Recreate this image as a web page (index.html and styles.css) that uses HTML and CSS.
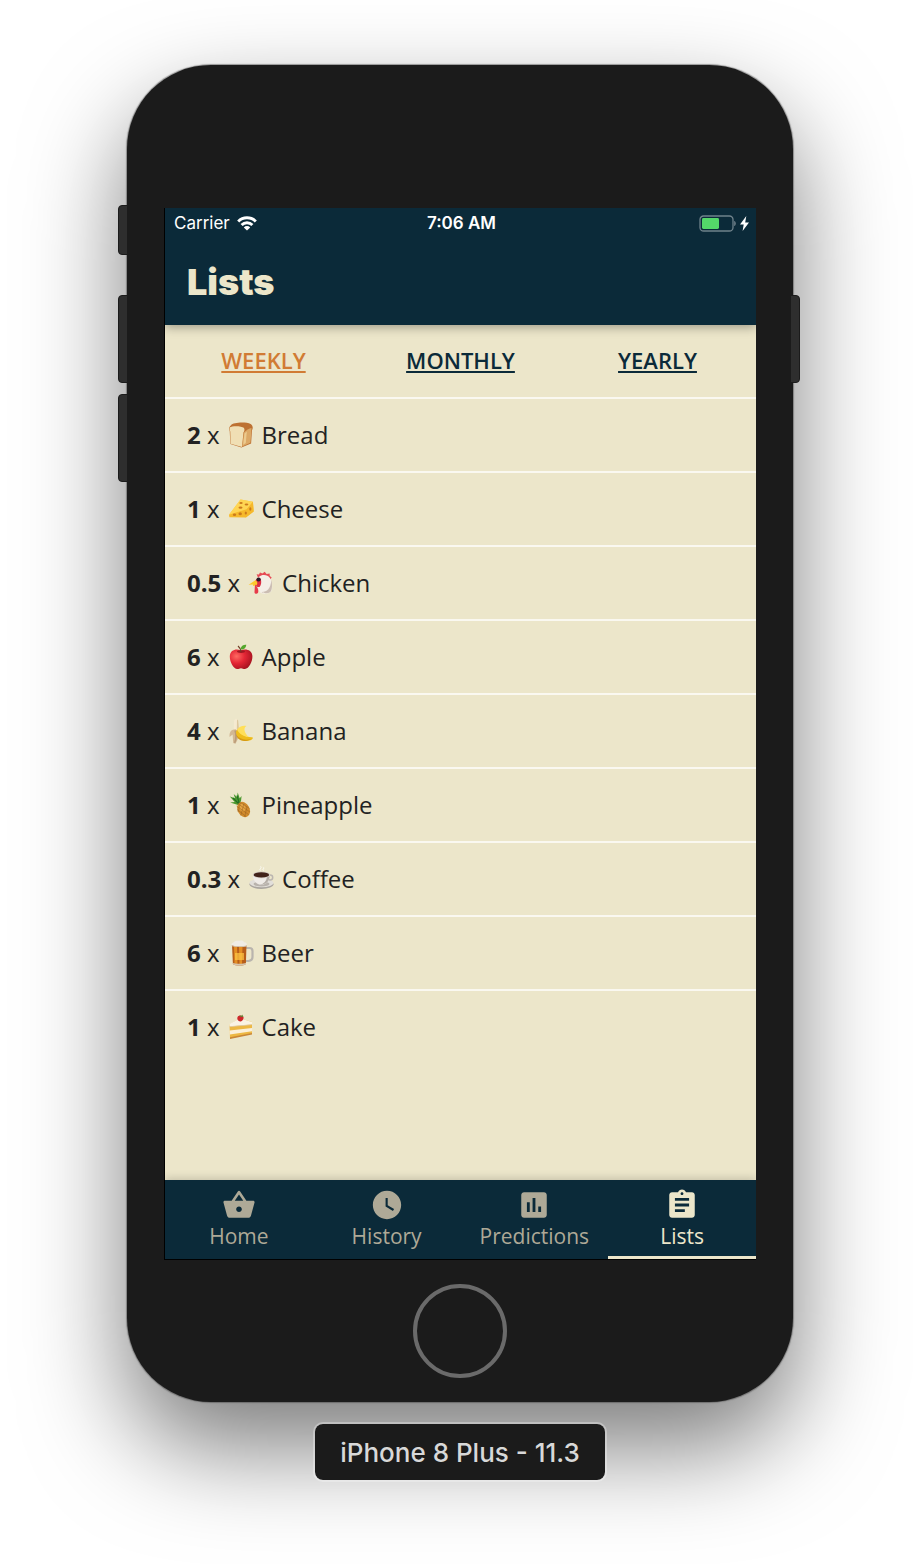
FILE: index.html
```html
<!DOCTYPE html>
<html lang="en">
<head>
<meta charset="utf-8">
<meta name="viewport" content="width=device-width, initial-scale=1">
<title>Lists</title>
<link rel="stylesheet" href="styles.css">
</head>
<body>
<div class="stage">
  <div class="phone">
    <span class="side-key side-key-mute"></span>
    <span class="side-key side-key-up"></span>
    <span class="side-key side-key-down"></span>
    <span class="side-key side-key-power"></span>
    <div class="screen">
      <header class="top">
        <div class="status">
          <div class="status-left">
            <span>Carrier</span>
            <svg class="wifi" viewBox="0 0 20 15" aria-hidden="true"><g fill="none" stroke="#fff" stroke-width="2.9"><path d="M1.2 5.4a12.4 12.4 0 0 1 17.6 0"/><path d="M4.6 9a7.6 7.6 0 0 1 10.8 0"/></g><path d="M10 14.6l-3.2-3.2a4.5 4.5 0 0 1 6.4 0z" fill="#fff"/></svg>
          </div>
          <time class="clock">7:06 AM</time>
          <div class="status-right">
            <svg class="battery" viewBox="0 0 38 17" aria-hidden="true"><rect x="2" y="1" width="33" height="15" rx="3.6" fill="none" stroke="#6f828b" stroke-width="1.3"/><rect x="4" y="3" width="17" height="11" rx="1.4" fill="#53d769"/><path d="M36.400 6c1.600.6 1.600 4.400 0 5z" fill="#8d9ba2"/></svg>
            <svg class="bolt" viewBox="0 0 9 15" aria-hidden="true"><path d="M6.3 0L0 8.4h3.7L2.6 15 9 6.4H5.2z" fill="#fff"/></svg>
          </div>
        </div>
        <h1 class="title">Lists</h1>
      </header>
      <main class="content">
        <nav class="periods" aria-label="Period">
          <a class="period period-active" href="#weekly">WEEKLY</a>
          <a class="period" href="#monthly">MONTHLY</a>
          <a class="period" href="#yearly">YEARLY</a>
        </nav>
        <ul class="items">
          <li class="item"><span><b>2</b> x</span>
            <svg class="food" viewBox="0 0 26 26" role="img" aria-label="bread"><path d="M3 3.200C5 .3 18-.3 22.600 2c2.600 1.400 2.500 4.800 1.400 6.200l-.9 13.200-9.700 4.200-11-3.500-.7-13C.4 7 1.200 4.800 3 3.200z" fill="#bd7132"/><path d="M2 5.300c1.800-1.700 11.800-1.500 13.800.4 1.200 1.500.6 3.600-.3 4.600L14 25 2.600 21.700l-.3-12.100C1.400 8.400 1.200 6.500 2 5.300z" fill="#f0dfb4"/><path d="M15.900 10.500c2-2 5.600-4.500 7.600-4.500-.2 4-.6 11-1.100 14.800L14.200 24.600z" fill="#dba866"/><path d="M16.500 11.500l2.300-2-1 11.500-2.600 1.700z" fill="#ecca8e"/></svg>
            <span>Bread</span></li>
          <li class="item"><span><b>1</b> x</span>
            <svg class="food" viewBox="0 0 26 26" role="img" aria-label="cheese"><path d="M1 18.800L12.500 3.600l12.400 2.200.8 9.600-7.700 5.800z" fill="#f8c83c"/><path d="M1 18.800L12.500 3.600l12.400 2.200L18.600 14z" fill="#ffd553"/><path d="M1 18.800l17.600-5.600L24.900 5.800l.8 9.600-7.700 6-16.600-.2z" fill="#f6b92c"/><g fill="#cb7a1c"><ellipse cx="13" cy="7" rx="1.700" ry="1"/><ellipse cx="18.500" cy="8.500" rx="1.900" ry="1.100"/><ellipse cx="12.500" cy="11.600" rx="2" ry="1.200"/><ellipse cx="6.500" cy="18.800" rx="1.700" ry="1.200"/><ellipse cx="12.200" cy="17.800" rx="1.700" ry="1.500"/><ellipse cx="17.800" cy="17" rx="1.100" ry="1.500"/><ellipse cx="22.300" cy="13" rx="1.100" ry="1.800"/></g></svg>
            <span>Cheese</span></li>
          <li class="item"><span><b>0.5</b> x</span>
            <svg class="food" viewBox="0 0 26 26" role="img" aria-label="chicken"><g transform="translate(1 1)"><path d="M9 6.500L7.600 3.200l2.300.4L11 1.400l2.400 1.200L15.700.8l1.900 2.200 3-.6.200 2.500 1.900 1.600-2.200 3z" fill="#e64b55"/><path d="M7.300 11C8.500 6 11 4 15 4c5 0 7.600 4 8 9.500.4 5-.2 7-2.500 8.300-3.700 1.500-9 1.300-10-1.300z" fill="#f4efe7"/><path d="M22.300 9c1.100 4 1.100 10-1.200 12.200-2.500 1.400-6.500 1.300-8.700-.2 5.300.3 9.300-3 9.900-12z" fill="#cbbdb2"/><path d="M6.600 9.500c1.500-3.500 4.600-3.800 5.400-.7.500 3 .1 5.500-1.500 7.200-3 .5-4.500-1.500-3.900-6.500z" fill="#dd2f43"/><circle cx="9.600" cy="8.500" r="2.100" fill="#261d26"/><path d="M-.4 13.700L6.400 9.200c2.200 1.300 2.500 3.600 1 5l-3.500.8.200-1.500z" fill="#fcc92c"/><path d="M6 13.500c2 1.500 4 6 3 8.200-.8 1.700-3.300 1.500-3.500-.5z" fill="#e73a49"/></g></svg>
            <span>Chicken</span></li>
          <li class="item"><span><b>6</b> x</span>
            <svg class="food" viewBox="0 0 26 26" role="img" aria-label="apple"><defs><radialGradient id="apple-skin" cx=".3" cy=".35" r=".8"><stop offset="0" stop-color="#ff6a62"/><stop offset=".45" stop-color="#e42635"/><stop offset="1" stop-color="#9b101c"/></radialGradient></defs><path d="M12.500 6.500C9 4.300 2 5.600 1.800 12.300 1.700 18 5.500 25 9.300 25c1.700 0 2-.8 3.700-.8s2 .8 3.900.8c4 0 7.700-7.200 7.500-12.900C24.100 5.500 17 4.300 12.500 6.500z" fill="url(#apple-skin)"/><ellipse cx="13" cy="7.600" rx="4" ry="1.300" fill="#9e1822"/><path d="M12.900 7.600C12.500 4.800 11.400 3 10 2" fill="none" stroke="#704027" stroke-width="1.300"/><path d="M12.600 5.400C12.900 2 15 .7 18.300.7 18 4 16 5.800 12.600 5.400z" fill="#55a72c"/></svg>
            <span>Apple</span></li>
          <li class="item"><span><b>4</b> x</span>
            <svg class="food" viewBox="0 0 26 26" role="img" aria-label="banana"><path d="M6 2.500L8 .5l2 2 1.200 10.500-5.400-1z" fill="#f5ead0"/><path d="M9 1.500l1.200 1 1 10.500-2.400-.6z" fill="#dcc79d"/><path d="M7.500 11.200C3.800 11.300 1 13.500 1.600 19l3-2.500.6 8.600 2.200.6c2-3.500 4-7 3-12.300z" fill="#d3b893"/><path d="M8.500 12.500c1 4 .5 9-1.300 12.800L6 24.500c1.500-4 1.500-8 .3-12z" fill="#b99a77"/><path d="M9.500 11c2 4 7 8.500 15 8.300.8 1.200 0 2-1.300 2.600C15.700 25 8.500 21 7.900 14z" fill="#efbd1b"/><path d="M9 11.500c2-2.500 5.700-4.500 9.500-3.500-3.300 1.500-2.500 6.500 2 11-5-.7-9.200-3-11.500-7.500z" fill="#ffdf58"/><path d="M8 16.500c3.600 4.800 9 6.300 15.500 4.200-6.500 4-13.500 2.800-15.500-4.200z" fill="#d59a15"/></svg>
            <span>Banana</span></li>
          <li class="item"><span><b>1</b> x</span>
            <svg class="food" viewBox="0 0 26 26" role="img" aria-label="pineapple"><path d="M10 13L2.200 10.600l4.500-.5L1.800 4.400 7 6.300 5.700 2 9 5 9.700.6l2 5.700L13.600 4l-.6 5.200z" fill="#4b982d"/><path d="M5 6l5.500 5.500M9 3.500l2.300 8" stroke="#226d25" stroke-width="1.100"/><ellipse cx="15.600" cy="17.500" rx="6" ry="8" transform="rotate(-28 15.600 17.500)" fill="#d18b2c"/><ellipse cx="14.300" cy="15.500" rx="3" ry="4" transform="rotate(-28 14.300 15.500)" fill="#e5a543"/><path d="M8.500 14l12 8.500m-11-11L22 20m-9.500-9.500l9 6M9 17.500l9 7M12.500 10.500L10 20m6-8.500l-3.200 12m6.200-9L16.700 25" stroke="#986020" stroke-width=".5" fill="none"/></svg>
            <span>Pineapple</span></li>
          <li class="item"><span><b>0.3</b> x</span>
            <svg class="food" viewBox="0 0 26 26" role="img" aria-label="coffee"><ellipse cx="13.500" cy="18.300" rx="12" ry="4.600" fill="#aaa59f"/><ellipse cx="13.500" cy="17" rx="12" ry="4.200" fill="#e2dfda"/><ellipse cx="13.500" cy="18" rx="8" ry="2.500" fill="#b9b3ad"/><circle cx="22.200" cy="11.500" r="2.500" fill="none" stroke="#bcb6b0" stroke-width="1.500"/><path d="M4.800 9c.3 5.800 3.700 9.800 8.600 9.800s8.400-4 8.500-9.800z" fill="#efebe7"/><path d="M21.700 10c-.4 5.500-4 8.800-9.700 8.700 4-1 6.500-3.500 7-7.700z" fill="#b5aea7"/><ellipse cx="13.400" cy="8.800" rx="8.700" ry="3.400" fill="#d5cec5"/><ellipse cx="13.400" cy="8.900" rx="7.700" ry="2.700" fill="#42231a"/><path d="M12.500 4.500c-2-1.600 2-2.400 0-4.200m3 4.400c-1.600-1.500 1-2 .1-3.300" fill="none" stroke="#fff" stroke-width="1" opacity=".75"/></svg>
            <span>Coffee</span></li>
          <li class="item"><span><b>6</b> x</span>
            <svg class="food" viewBox="0 0 26 26" role="img" aria-label="beer"><path d="M17 8h4.500c2 0 3 1 3 3v6c0 2.500-1.300 3.600-4 4H17" fill="none" stroke="#b9b4ad" stroke-width="2.200"/><path d="M4 5h14.500l-.6 19c-2 2-10.800 2-13 0z" fill="#b75e1a"/><path d="M6 6h3l.5 18-3-.6zm5 0h3.500l-.5 18h-2.500z" fill="#e48f25"/><path d="M7 13h9v7H7z" fill="#ffc746" opacity=".7"/><path d="M4.800 23c3 1 10.600 1 13.200 0v1.200c-2.500 1.700-10.700 1.700-13 0z" fill="#d6c6af"/><path d="M3.500 5.300C3.200 2.700 5.600 2.800 6.200 1.700 8 .2 10.300 1 12 .7c2-.4 3.500.3 4.200 1.500 2.400.2 3 1.500 2.400 3.600C15 7 6.600 6.800 3.500 5.300z" fill="#f0ece5"/><path d="M3.500 5.200c4 1.400 11 1.500 15.200.3v.9C14 7.500 7 7.300 3.500 6z" fill="#cfc4b5"/></svg>
            <span>Beer</span></li>
          <li class="item"><span><b>1</b> x</span>
            <svg class="food" viewBox="0 0 26 26" role="img" aria-label="cake"><path d="M1.500 10.500L12 4.200 24 8v11.500L2 24.500z" fill="#edb844"/><path d="M1.500 10L12 4.200 24 8v2.500l-22.500 2z" fill="#faf3e4"/><path d="M1.500 12.200L24 10.200v.9l-22.400 2z" fill="#dfcba6"/><path d="M1.600 16.500L24 14v3.200L1.700 20.500z" fill="#fbf0da"/><path d="M2 23.300L24 19v1.500L2 25z" fill="#c98637"/><path d="M9.300 4.700c0-2.500 1.500-3.300 3.300-3.200 2.400 0 3.500 1.500 2.800 3.300-.8 2-2 2.700-3 2.600-1.400 0-2.700-1-3.100-2.700z" fill="#ce282b"/><path d="M11 1.500l2.500.2L15 .6l-.4 1.700 1 .7-3-.3z" fill="#578f37"/></svg>
            <span>Cake</span></li>
        </ul>
      </main>
      <nav class="tabs" aria-label="Main">
        <a class="tab" href="#home">
          <svg class="tab-icon" viewBox="0 0 24 24" aria-hidden="true"><path d="M17.210 9l-4.380-6.560c-.19-.28-.51-.42-.83-.42-.32 0-.64.140-.83.430L6.790 9H2c-.55 0-1 .45-1 1 0 .090.010.180.040.270l2.540 9.270c.23.840 1 1.460 1.920 1.460h13c.92 0 1.690-.62 1.930-1.460l2.540-9.270L23 10c0-.55-.45-1-1-1h-4.790zM9 9l3-4.400L15 9H9zm3 8c-1.100 0-2-.9-2-2s.9-2 2-2 2 .9 2 2-.9 2-2 2z"/></svg>
          <span>Home</span></a>
        <a class="tab" href="#history">
          <svg class="tab-icon" viewBox="0 0 24 24" aria-hidden="true"><path d="M12 2C6.500 2 2 6.500 2 12s4.500 10 10 10 10-4.500 10-10S17.500 2 12 2zm4.200 14.200L11 13V7h1.500v5.200l4.500 2.700-.8 1.300z"/></svg>
          <span>History</span></a>
        <a class="tab" href="#predictions">
          <svg class="tab-icon" viewBox="0 0 24 24" aria-hidden="true"><path d="M19 3H5c-1.100 0-2 .9-2 2v14c0 1.100.9 2 2 2h14c1.100 0 2-.9 2-2V5c0-1.100-.9-2-2-2zM9 17H7v-7h2v7zm4 0h-2V7h2v10zm4 0h-2v-4h2v4z"/></svg>
          <span>Predictions</span></a>
        <a class="tab tab-active" href="#lists" aria-current="page">
          <svg class="tab-icon" viewBox="0 0 24 24" aria-hidden="true"><path d="M19 3h-4.180C14.400 1.840 13.300 1 12 1c-1.300 0-2.400.84-2.820 2H5c-1.100 0-2 .9-2 2v14c0 1.100.9 2 2 2h14c1.100 0 2-.9 2-2V5c0-1.100-.9-2-2-2zm-7 0c.55 0 1 .45 1 1s-.45 1-1 1-1-.45-1-1 .45-1 1-1zm2 14H7v-2h7v2zm3-4H7v-2h10v2zm0-4H7V7h10v2z"/></svg>
          <span>Lists</span></a>
      </nav>
    </div>
    <button class="home" type="button" aria-label="Home button"></button>
  </div>
  <p class="device">iPhone 8 Plus - 11.3</p>
</div>
</body>
</html>
```
FILE: styles.css
```css
:root {
  --navy: #0b2a39;
  --cream: #ece6ca;
  --shell: #1b1b1b;
}

* {
  box-sizing: border-box;
}

body {
  margin: 0;
  background: #fff;
}

.stage {
  display: flex;
  flex-direction: column;
  align-items: center;
  gap: 20px;
  padding: 65px 127px 82px;
  overflow: hidden;
  font-family: "Open Sans", "Noto Sans", sans-serif;
}

.phone {
  position: relative;
  display: flex;
  flex-direction: column;
  align-items: center;
  gap: 24px;
  width: 100%;
  padding: 143px 37px 24px;
  border-radius: 84px;
  background: var(--shell);
  box-shadow: 0 0 1px 1px rgba(70, 70, 70, .5), 0 45px 100px rgba(0, 0, 0, .52);
}

.side-key {
  position: absolute;
  left: -9px;
  width: 10px;
  height: 88px;
  border: 1px solid #1b1b1b;
  border-radius: 4px 0 0 4px;
  background: #2e2e2e;
}

.side-key-mute {
  top: 140px;
  height: 50px;
}

.side-key-up {
  top: 230px;
}

.side-key-down {
  top: 329px;
}

.side-key-power {
  top: 230px;
  right: -7px;
  left: auto;
  border-radius: 0 4px 4px 0;
}

.screen {
  width: 100%;
  border-bottom: 1px solid #000;
  border-left: 1px solid #000;
  background: var(--cream);
}

.top {
  position: relative;
  background: var(--navy);
  box-shadow: 0 2px 10px rgba(0, 0, 0, .35);
  clip-path: inset(0 0 -20px 0);
}

.status {
  display: grid;
  grid-template-columns: 1fr auto 1fr;
  align-items: center;
  height: 30px;
  padding: 0 7px 0 9px;
  color: #fff;
  font: 400 17px/30px Inter, sans-serif;
}

.status-left,
.status-right {
  display: flex;
  align-items: center;
  gap: 7px;
}

.status-right {
  justify-content: flex-end;
  gap: 4px;
}

.clock {
  font-weight: 600;
}

.wifi {
  width: 20px;
  height: 15px;
}

.battery {
  width: 38px;
  height: 17px;
}

.bolt {
  width: 9px;
  height: 15px;
}

.title {
  margin: 0;
  padding: 22px 22px 21px;
  color: var(--cream);
  font: 900 36px/44px Inter, sans-serif;
}

.content {
  min-height: 855px;
}

.periods {
  display: grid;
  grid-template-columns: repeat(3, 1fr);
  justify-items: center;
  padding: 19px 0 21px;
}

.period {
  color: var(--navy);
  font-size: 22px;
  font-weight: 600;
  line-height: 32px;
  text-decoration-thickness: 2px;
  text-underline-offset: 2px;
}

.period-active {
  color: #d17b34;
}

.items {
  margin: 0;
  padding: 0;
  list-style: none;
}

.item {
  display: flex;
  align-items: center;
  gap: 8px;
  padding: 20px 22px;
  border-top: 2px solid #faf8f0;
  color: #222;
  font-size: 24px;
  font-weight: 500;
  line-height: 32px;
}

.food {
  flex: none;
  width: 26px;
  height: 26px;
}

.tabs {
  position: relative;
  display: grid;
  grid-template-columns: repeat(4, 1fr);
  background: var(--navy);
  box-shadow: 0 -2px 8px rgba(0, 0, 0, .16);
  clip-path: inset(-20px 0 0 0);
}

.tab {
  display: flex;
  flex-direction: column;
  align-items: center;
  padding: 8px 0 6px;
  border-bottom: 3px solid transparent;
  color: #aea997;
  font-size: 21px;
  font-weight: 500;
  line-height: 28px;
  text-decoration: none;
}

.tab-active {
  border-color: var(--cream);
  color: var(--cream);
}

.tab-icon {
  width: 34px;
  height: 34px;
  fill: currentColor;
}

.home {
  width: 94px;
  height: 94px;
  padding: 0;
  border: 4px solid #6a6a6a;
  border-radius: 50%;
  background: transparent;
}

.device {
  position: relative;
  margin: 0;
  padding: 13px 25px 11px;
  border: 2px solid rgba(255, 255, 255, .3);
  border-radius: 10px;
  background: var(--shell) padding-box;
  color: #d8d8d8;
  font: 500 26px/32px Inter, sans-serif;
}
```
